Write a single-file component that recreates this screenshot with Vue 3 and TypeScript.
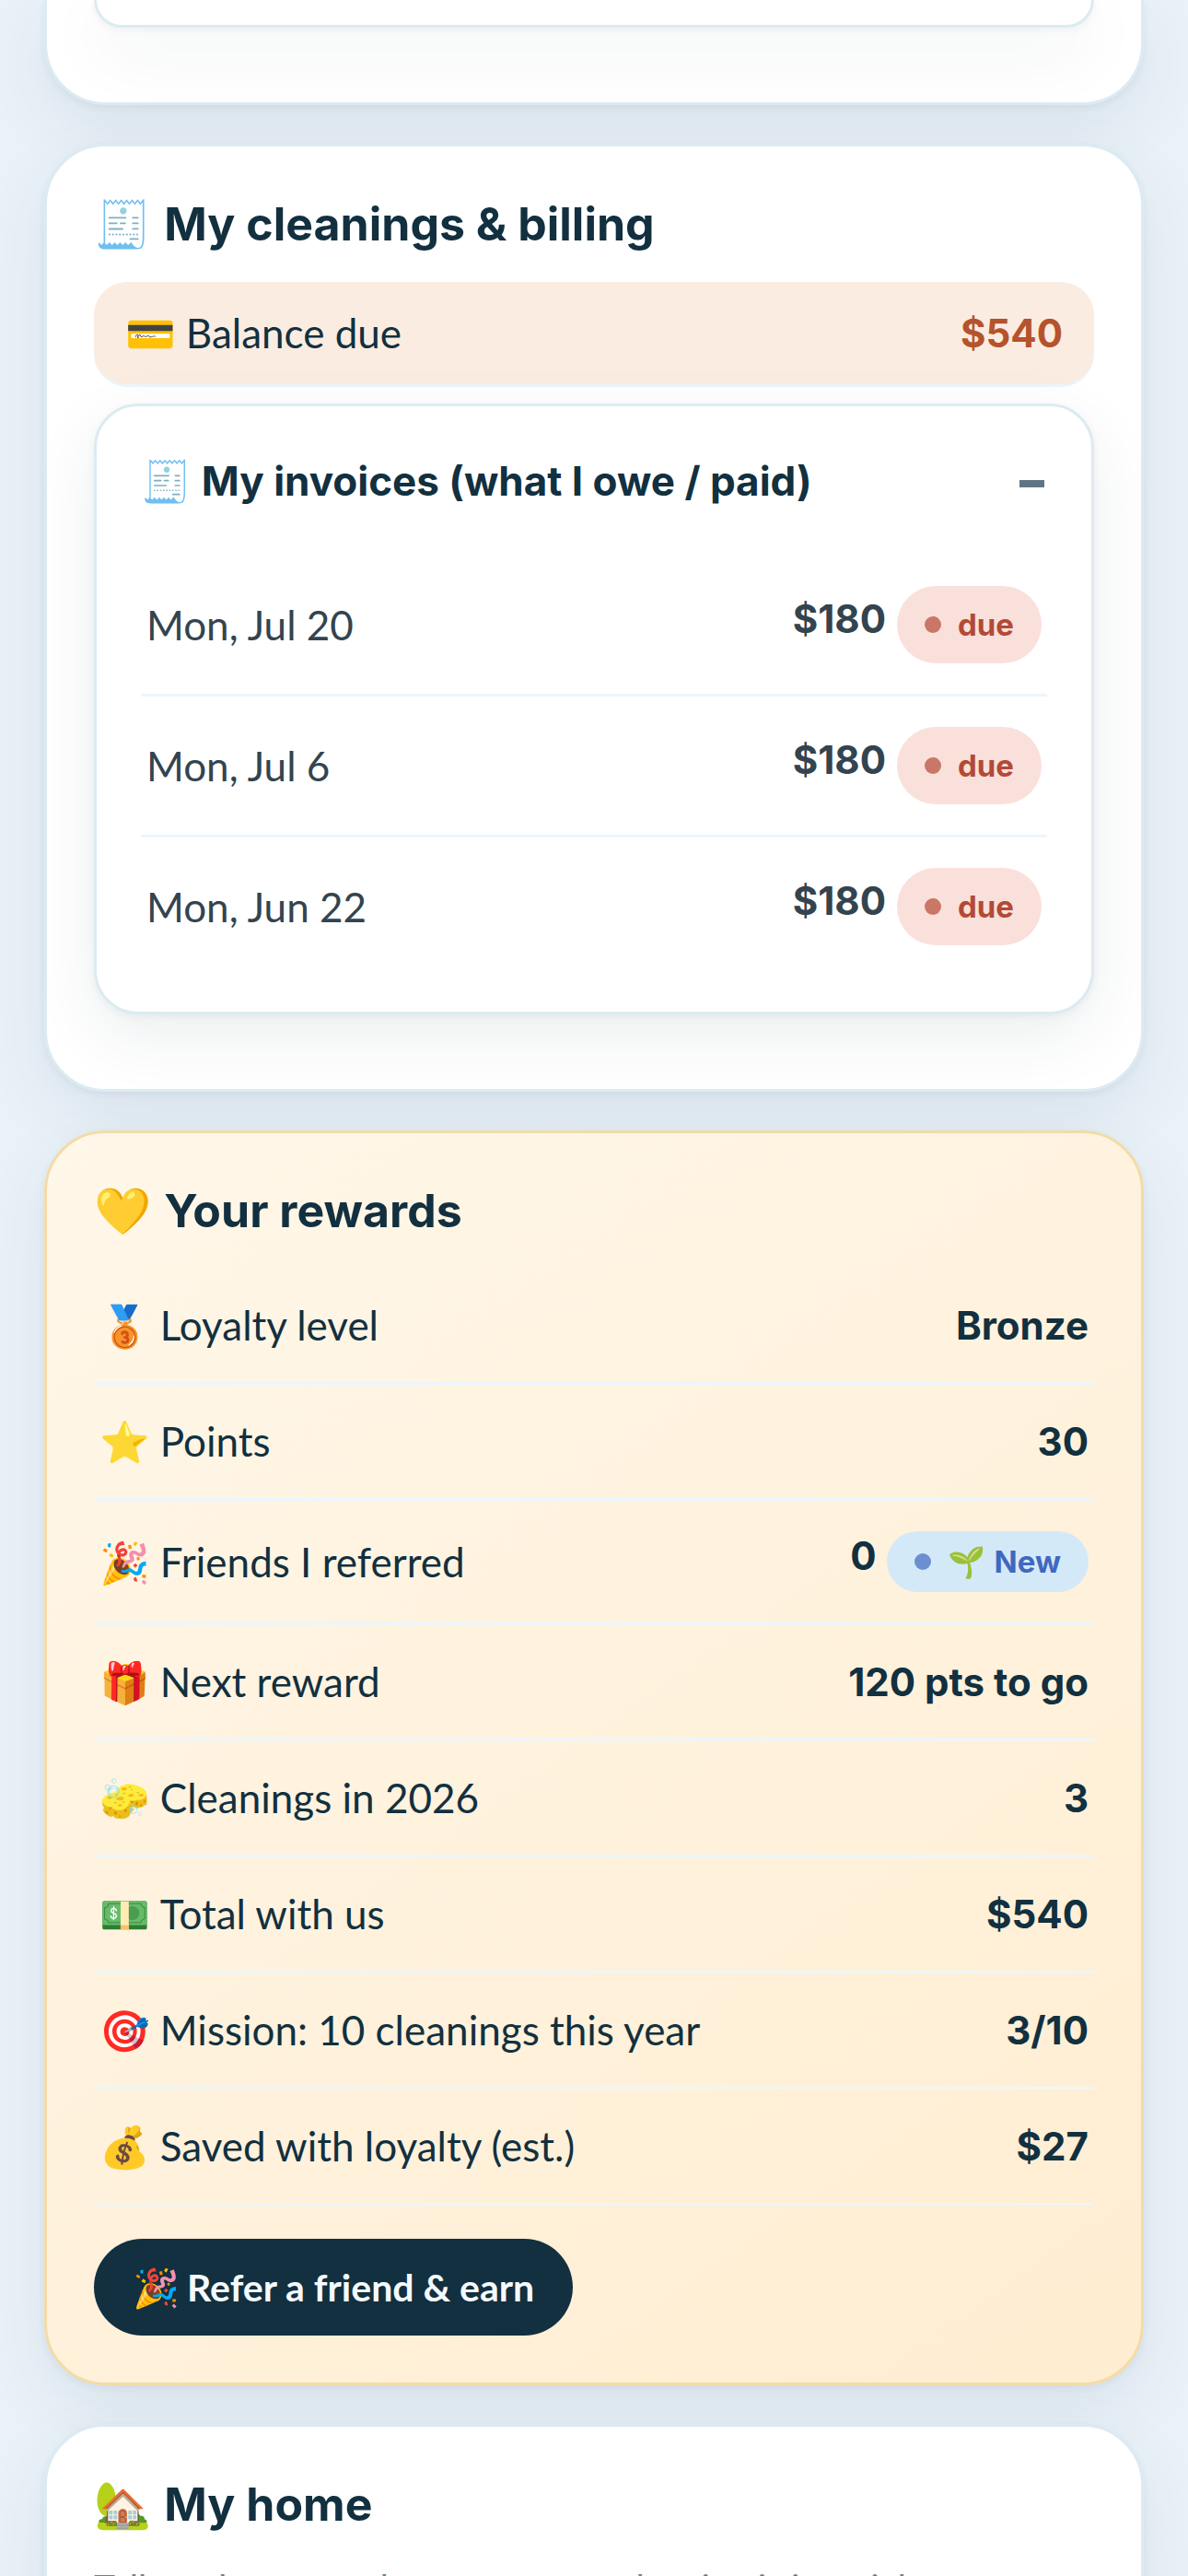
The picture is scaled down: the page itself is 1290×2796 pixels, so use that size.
<script setup lang="ts">
interface Invoice {
  date: string
  amount: string
  status: string
}

interface Reward {
  icon: string
  label: string
  value: string
  badge?: { icon: string; text: string }
}

const invoices: Invoice[] = [
  { date: 'Mon, Jul 20', amount: '$180', status: 'due' },
  { date: 'Mon, Jul 6', amount: '$180', status: 'due' },
  { date: 'Mon, Jun 22', amount: '$180', status: 'due' },
]

const rewards: Reward[] = [
  { icon: '🥉', label: 'Loyalty level', value: 'Bronze' },
  { icon: '⭐', label: 'Points', value: '30' },
  { icon: '🎉', label: 'Friends I referred', value: '0', badge: { icon: '🌱', text: 'New' } },
  { icon: '🎁', label: 'Next reward', value: '120 pts to go' },
  { icon: '🧽', label: 'Cleanings in 2026', value: '3' },
  { icon: '💵', label: 'Total with us', value: '$540' },
  { icon: '🎯', label: 'Mission: 10 cleanings this year', value: '3/10' },
  { icon: '💰', label: 'Saved with loyalty (est.)', value: '$27' },
]
</script>

<template>
  <main class="page">
    <section class="card card-previous" aria-hidden="true">
      <div class="panel panel-previous"></div>
    </section>

    <section class="card">
      <h2 class="title"><span>🧾</span><span>My cleanings &amp; billing</span></h2>
      <div class="balance">
        <span class="label"><span>💳</span><span>Balance due</span></span>
        <strong class="value">$540</strong>
      </div>
      <details class="panel" open>
        <summary class="summary">
          <span class="label"><span>🧾</span><span>My invoices (what I owe / paid)</span></span>
          <span class="toggle">–</span>
        </summary>
        <ul class="list invoices">
          <li v-for="invoice in invoices" :key="invoice.date" class="row">
            <span class="label">{{ invoice.date }}</span>
            <span class="figure">
              <strong class="value">{{ invoice.amount }}</strong>
              <span class="pill pill-due"><i class="dot"></i><span>{{ invoice.status }}</span></span>
            </span>
          </li>
        </ul>
      </details>
    </section>

    <section class="card card-rewards">
      <h2 class="title"><span>💛</span><span>Your rewards</span></h2>
      <ul class="list">
        <li v-for="reward in rewards" :key="reward.label" class="row">
          <span class="label"><span>{{ reward.icon }}</span><span>{{ reward.label }}</span></span>
          <span class="figure">
            <strong class="value">{{ reward.value }}</strong>
            <span v-if="reward.badge" class="pill pill-new">
              <i class="dot"></i>
              <span class="badge-text"><span>{{ reward.badge.icon }}</span><span>{{ reward.badge.text }}</span></span>
            </span>
          </span>
        </li>
      </ul>
      <button type="button" class="refer"><span>🎉</span><span>Refer a friend &amp; earn</span></button>
    </section>

    <section class="card">
      <h2 class="title"><span>🏡</span><span>My home</span></h2>
      <p class="intro">Tell us about your home so every cleaning is just right.</p>
    </section>
  </main>
</template>

<style>
body {
  margin: 0;
  background: #eaf2f9;
}
</style>

<style scoped>
.page {
  box-sizing: border-box;
  display: flex;
  flex-direction: column;
  gap: 42px;
  height: 100vh;
  padding: 0 48px;
  overflow: hidden;
  background: #eaf2f9;
  color: #12303f;
  font-family: "Lato", "Noto Color Emoji", sans-serif;
  font-size: 44px;
  line-height: 57px;
}

.card {
  flex: none;
  padding: 51px;
  border: 3px solid #dcebf2;
  border-radius: 66px;
  background: #fff;
  box-shadow: 0 3px 9px rgba(18, 48, 63, 0.06), 0 24px 72px rgba(18, 48, 63, 0.08);
}

.card-previous {
  padding-top: 0;
  border-top: 0;
  border-top-left-radius: 0;
  border-top-right-radius: 0;
}

.card-rewards {
  border-color: #f3dba8;
  background: linear-gradient(145deg, #fff7e9, #ffedd1);
}

.panel {
  margin: 18px 0 30px;
  padding: 0 48px 39px;
  border: 3px solid #dcebf2;
  border-radius: 48px;
  background: #fff;
  box-shadow: 0 3px 9px rgba(18, 48, 63, 0.05), 0 24px 72px rgba(18, 48, 63, 0.08);
}

.panel-previous {
  height: 27px;
  margin-top: 0;
  padding: 0;
  border-top: 0;
  border-radius: 0 0 48px 48px;
}

.title {
  display: flex;
  align-items: center;
  gap: 14px;
  margin: 0 0 30px;
  font-family: "Inter", "Noto Color Emoji", sans-serif;
  font-size: 50px;
  font-weight: 700;
  line-height: 66px;
}

.label {
  display: flex;
  align-items: center;
  gap: 11px;
}

.value {
  font-family: "Inter", sans-serif;
  font-size: 42px;
  font-weight: 700;
  line-height: 54px;
}

.balance {
  display: flex;
  align-items: center;
  justify-content: space-between;
  padding: 27px 34px;
  border-bottom: 3px solid #ecf5fa;
  border-radius: 36px;
  background: #fbece1;
}

.balance .value {
  color: #b5532c;
}

.summary {
  display: flex;
  align-items: center;
  justify-content: space-between;
  padding: 48px 0;
  font-family: "Inter", "Noto Color Emoji", sans-serif;
  font-size: 44px;
  font-weight: 700;
  line-height: 66px;
  list-style: none;
  cursor: pointer;
}

.toggle {
  padding-right: 3px;
  color: #5f7586;
  font-size: 54px;
  font-weight: 900;
}

.list {
  margin: 0;
  padding: 0;
  list-style: none;
}

.row {
  display: flex;
  align-items: center;
  justify-content: space-between;
  padding: 33px 6px;
  border-bottom: 3px solid #ecf6fb;
}

.invoices .row {
  color: #33444f;
}

.invoices .row:last-child {
  border-bottom: 0;
}

.figure {
  display: flex;
  align-items: center;
  gap: 12px;
}

.figure .value:not(:last-child) {
  margin-bottom: 12px;
}

.pill {
  display: flex;
  align-items: center;
  gap: 18px;
  padding: 0 30px;
  border-radius: 42px;
  font-family: "Inter", "Noto Color Emoji", sans-serif;
  font-size: 33px;
  font-weight: 700;
}

.pill-due {
  background: #fae0db;
  color: #b34a36;
  line-height: 84px;
}

.pill-new {
  background: #d4e9f8;
  color: #4068c0;
  line-height: 66px;
}

.badge-text {
  display: flex;
  gap: 9px;
}

.dot {
  width: 18px;
  height: 18px;
  border-radius: 50%;
  background: currentColor;
  opacity: 0.7;
}

.refer {
  display: inline-flex;
  align-items: center;
  gap: 8px;
  margin-top: 36px;
  padding: 24px 42px;
  border: 0;
  border-radius: 54px;
  background: #12303f;
  color: #f5faff;
  font-family: "Lato", "Noto Color Emoji", sans-serif;
  font-size: 41px;
  font-weight: 700;
  line-height: 57px;
  vertical-align: top;
  cursor: pointer;
}

.intro {
  margin: 0;
  color: #6b8090;
  font-size: 39px;
  line-height: 54px;
}
</style>
